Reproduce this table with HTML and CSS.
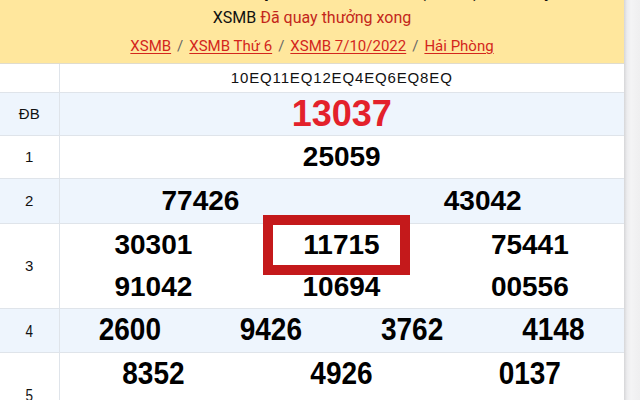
FILE: index.html
```html
<!DOCTYPE html>
<html lang="vi">
<head>
<meta charset="utf-8">
<title>XSMB 7/10/2022</title>
<link rel="stylesheet" href="styles.css">
</head>
<body>
<div class="page">
  <div class="main">
    <header class="head">
      <h1 class="title">XSMB 7/10/2022 - Kết quả xổ số miền Bắc (Thứ 6) hôm nay</h1>
      <p class="status"><span class="k">XSMB</span> <span class="r">Đã quay thưởng xong</span></p>
      <div class="crumbs-row"><nav class="crumbs"><a href="#">XSMB</a><span class="sep">/</span><a href="#">XSMB Thứ 6</a><span class="sep">/</span><a href="#">XSMB 7/10/2022</a><span class="sep">/</span><a href="#">Hải Phòng</a></nav></div>
    </header>
    <table class="kq">
      <colgroup>
        <col class="c-label">
        <col span="12">
      </colgroup>
      <tr class="r-code">
        <td class="lbl"></td>
        <td colspan="12" class="code">10EQ11EQ12EQ4EQ6EQ8EQ</td>
      </tr>
      <tr class="r-db alt">
        <td class="lbl">ĐB</td>
        <td colspan="12" class="num db">13037</td>
      </tr>
      <tr class="r-1">
        <td class="lbl">1</td>
        <td colspan="12" class="num">25059</td>
      </tr>
      <tr class="r-2 alt">
        <td class="lbl">2</td>
        <td colspan="6" class="num">77426</td>
        <td colspan="6" class="num">43042</td>
      </tr>
      <tr class="r-3">
        <td class="lbl">3</td>
        <td colspan="4" class="num"><div class="ln">30301</div><div class="ln">91042</div></td>
        <td colspan="4" class="num mark-cell"><div class="ln">11715</div><div class="ln">10694</div><span class="mark"></span></td>
        <td colspan="4" class="num"><div class="ln">75441</div><div class="ln">00556</div></td>
      </tr>
      <tr class="r-4 alt">
        <td class="lbl"><span class="tall-s">4</span></td>
        <td colspan="3" class="num"><span class="tall">2600</span></td>
        <td colspan="3" class="num"><span class="tall">9426</span></td>
        <td colspan="3" class="num"><span class="tall">3762</span></td>
        <td colspan="3" class="num"><span class="tall">4148</span></td>
      </tr>
      <tr class="r-5">
        <td class="lbl"><span class="tall-s">5</span></td>
        <td colspan="4" class="num"><div class="ln"><span class="tall">8352</span></div><div class="ln"><span class="tall">7412</span></div></td>
        <td colspan="4" class="num"><div class="ln"><span class="tall">4926</span></div><div class="ln"><span class="tall">5063</span></div></td>
        <td colspan="4" class="num"><div class="ln"><span class="tall">0137</span></div><div class="ln"><span class="tall">2290</span></div></td>
      </tr>
    </table>
  </div>
  <div class="scroll"></div>
</div>
</body>
</html>
```
FILE: styles.css
```css
html, body {
  margin: 0;
  padding: 0;
  background: #ffffff;
  overflow: hidden;
}
body {
  width: 640px;
  height: 400px;
  font-family: "Liberation Sans", Arial, sans-serif;
}
.page {
  display: flex;
  height: 400px;
  overflow: hidden;
}
.main {
  width: 624px;
  flex: none;
}
.scroll {
  flex: 1;
  background: linear-gradient(to right, #d6d6d8 0, #ececee 3px, #f4f4f5 7px, #efeff0 100%);
}
.head {
  background: #ffe79d;
  border-bottom: 1px solid #e0dccd;
  height: 63px;
  text-align: center;
  overflow: hidden;
}
.title {
  margin: -21px 0 0;
  height: 24px;
  font: bold 18px/24px "Roboto", "Liberation Sans", sans-serif;
  color: #111;
  white-space: nowrap;
}
.status {
  margin: 4px 0 0;
  height: 22px;
  font: 16px/22px "Roboto", sans-serif;
}
.status .k { color: #111; }
.status .r { color: #c3261a; }
.crumbs-row {
  margin-top: 6px;
  height: 22px;
}
.crumbs {
  font: 15px/22px "Roboto", sans-serif;
  color: #555;
}
.crumbs a {
  color: #d3261c;
  text-decoration: underline;
  text-underline-offset: 2px;
}
.crumbs .sep {
  margin: 0 6px;
  color: #666;
}
.kq {
  width: 624px;
  border-collapse: collapse;
  table-layout: fixed;
}
.c-label { width: 59px; }
.kq td {
  padding: 0;
  border-top: 1px solid #dfe4ea;
  text-align: center;
  vertical-align: middle;
}
.kq tr:first-child td { border-top: 0; }
.kq .lbl {
  border-right: 1px solid #dfe4ea;
  font-size: 15px;
  color: #111;
}
.alt td { background: #eef5fd; }
.r-code { height: 28px; }
.r-db { height: 43px; }
.r-1 { height: 42px; }
.r-2 { height: 45px; }
.r-3 { height: 84px; }
.r-4 { height: 44px; }
.r-5 { height: 84px; }
.code {
  font-size: 15px;
  letter-spacing: 0.85px;
  color: #111;
}
.num {
  font-weight: bold;
  font-size: 28px;
  line-height: 42px;
  color: #000;
}
.num.db {
  color: #e3212b;
  font-size: 36px;
}
.ln { height: 42px; }
.tall {
  display: inline-block;
  transform: scaleY(1.12);
}
.tall-s {
  display: inline-block;
  transform: scale(0.9, 1.1);
}
.mark-cell { position: relative; }
.mark {
  position: absolute;
  left: 16px;
  top: -9px;
  width: 127px;
  height: 40px;
  border: 10px solid #c4191b;
}
```
